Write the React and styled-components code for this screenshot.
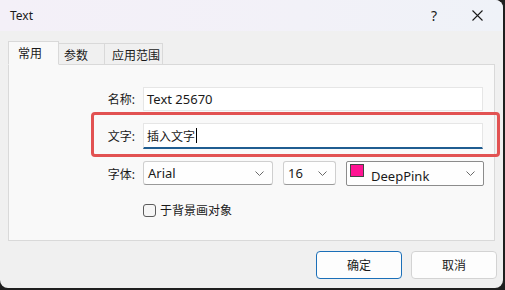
import React from 'react';
import styled, { createGlobalStyle } from 'styled-components';

const GlobalStyle = createGlobalStyle`
  html, body {
    margin: 0;
    padding: 0;
    background: #1f1f1f;
  }
  body {
    font-family: "Noto Sans", "Noto Sans CJK SC", sans-serif;
    font-size: 12px;
    color: #1a1a1a;
  }
`;

const Chevron = () => (
  <svg width="9" height="5" viewBox="0 0 9 5">
    <path d="M0.5 0.5 L4.5 4.5 L8.5 0.5" fill="none" stroke="#6a6a6a" strokeWidth="1" />
  </svg>
);

const CloseIcon = () => (
  <svg width="11" height="11" viewBox="0 0 11 11">
    <path d="M0.5 0.5 L10.5 10.5 M10.5 0.5 L0.5 10.5" stroke="#1a1a1a" strokeWidth="1.1" />
  </svg>
);

const App = () => {
  return (
    <>
      <GlobalStyle />
      <Window>
        <TitleBar>
          <Title>Text</Title>
          <TitleButtons>
            <HelpBtn>?</HelpBtn>
            <CloseBtn>
              <CloseIcon />
            </CloseBtn>
          </TitleButtons>
        </TitleBar>

        <Content>
          <TabStrip>
            <Tab active width={51} pad={9}>常用</Tab>
            <Tab width={46} pad={5}>参数</Tab>
            <Tab width={58} pad={7}>应用范围</Tab>
          </TabStrip>

          <Panel>
            <Form>
              <Label>名称:</Label>
              <TextInput>Text 25670</TextInput>

              <Label>文字:</Label>
              <TextInput focused size={12}>
                插入文字
                <Caret />
              </TextInput>

              <Label>字体:</Label>
              <ComboRow>
                <Combo width={130}>
                  <ComboText>Arial</ComboText>
                  <Chevron />
                </Combo>
                <Combo width={53}>
                  <ComboText>16</ComboText>
                  <Chevron />
                </Combo>
                <ColorCombo>
                  <Swatch color="#ff1493" />
                  <ColorText>DeepPink</ColorText>
                  <Chevron />
                </ColorCombo>
              </ComboRow>

              <span />
              <CheckRow>
                <CheckBox />
                <span>于背景画对象</span>
              </CheckRow>
            </Form>
          </Panel>

          <Footer>
            <Button primary>确定</Button>
            <Button>取消</Button>
          </Footer>
        </Content>

        <Highlight />
      </Window>
    </>
  );
};

const Window = styled.div`
  position: relative;
  width: 503px;
  height: 288px;
  background: #f0f0f0;
  border-radius: 0 8px 8px 8px;
  overflow: hidden;
  display: flex;
  flex-direction: column;
`;

const TitleBar = styled.div`
  height: 31px;
  display: flex;
  align-items: center;
  justify-content: space-between;
  padding-left: 10px;
  background: linear-gradient(90deg, #f4f0f8 0%, #f2f1f8 60%, #eff2f8 100%);
`;

const Title = styled.div`
  font-size: 12px;
  color: #1a1a1a;
`;

const TitleButtons = styled.div`
  display: flex;
  align-items: center;
  height: 100%;
`;

const HelpBtn = styled.div`
  width: 46px;
  display: flex;
  justify-content: center;
  font-size: 14px;
  color: #1a1a1a;
  margin-right: -3px;
`;

const CloseBtn = styled.div`
  width: 46px;
  display: flex;
  justify-content: center;
  padding-right: 3px;
`;

const Content = styled.div`
  flex: 1;
  display: flex;
  flex-direction: column;
  padding: 10px 0 0 8px;
`;

const TabStrip = styled.div`
  display: flex;
  align-items: flex-end;
  height: 24px;
  position: relative;
  z-index: 1;
  margin-bottom: -1px;
`;

const Tab = styled.div`
  box-sizing: border-box;
  width: ${p => p.width}px;
  height: ${p => (p.active ? 24 : 22)}px;
  padding-left: ${p => p.pad}px;
  display: flex;
  align-items: center;
  font-size: 12px;
  color: #1a1a1a;
  background: ${p => (p.active ? '#f9f9f9' : '#f0f0f0')};
  border: 1px solid #d9d9d9;
  border-bottom: ${p => (p.active ? '1px solid #f9f9f9' : '1px solid #d9d9d9')};
  border-left: ${p => (p.active ? '1px solid #d9d9d9' : 'none')};
  padding-top: ${p => (p.active ? 0 : 1)}px;
`;

const Panel = styled.div`
  box-sizing: border-box;
  width: 487px;
  height: 177px;
  background: #f9f9f9;
  border: 1px solid #d9d9d9;
`;

const Form = styled.div`
  display: grid;
  grid-template-columns: 126px 340px;
  column-gap: 8px;
  row-gap: 12px;
  align-items: center;
  padding-top: 22px;
`;

const Label = styled.div`
  text-align: right;
  font-size: 12px;
  color: #1a1a1a;
`;

const TextInput = styled.div`
  box-sizing: border-box;
  height: ${p => (p.focused ? 26 : 24)}px;
  display: flex;
  align-items: center;
  padding-left: 3px;
  background: #ffffff;
  border: 1px solid #e6e6e6;
  border-bottom: ${p => (p.focused ? '2px solid #1f5d91' : '1px solid #e6e6e6')};
  font-size: ${p => p.size || 13}px;
  color: #1a1a1a;
`;

const Caret = styled.span`
  display: inline-block;
  width: 1px;
  height: 15px;
  background: #000;
  margin-left: 1px;
`;

const ComboRow = styled.div`
  display: flex;
  gap: 10px;
  margin-right: -1px;
`;

const Combo = styled.div`
  box-sizing: border-box;
  width: ${p => p.width}px;
  height: 24px;
  display: flex;
  align-items: center;
  justify-content: space-between;
  padding: 0 8px 0 4px;
  background: #fefefe;
  border: 1px solid #cfcfcf;
  border-bottom-color: #9a9a9a;
  border-radius: 3px;
`;

const ComboText = styled.span`
  font-size: 13px;
  color: #1a1a1a;
`;

const ColorCombo = styled.div`
  box-sizing: border-box;
  flex: 1;
  height: 25px;
  display: flex;
  align-items: center;
  padding: 0 8px 0 3px;
  background: #fefefe;
  border: 1px solid #8c8c8c;
  border-radius: 2px;
`;

const Swatch = styled.span`
  box-sizing: border-box;
  width: 14px;
  height: 13px;
  background: ${p => p.color};
  border: 1px solid #444;
  margin-top: -6px;
  margin-right: 7px;
`;

const ColorText = styled.span`
  flex: 1;
  font-size: 13px;
  line-height: 16px;
  color: #1a1a1a;
  margin-top: 5px;
`;

const CheckRow = styled.div`
  display: flex;
  align-items: center;
  gap: 4px;
  margin-top: 3px;
  font-size: 12px;
  color: #1a1a1a;
`;

const CheckBox = styled.span`
  box-sizing: border-box;
  width: 13px;
  height: 13px;
  border: 1px solid #5c5c5c;
  border-radius: 3px;
  background: #f6f6f6;
`;

const Footer = styled.div`
  display: flex;
  justify-content: flex-end;
  gap: 9px;
  padding: 10px 6px 0 0;
`;

const Button = styled.div`
  box-sizing: border-box;
  width: 86px;
  height: 28px;
  display: flex;
  align-items: center;
  justify-content: center;
  font-size: 12px;
  color: #1a1a1a;
  background: #fdfdfd;
  border: ${p => (p.primary ? '1.5px solid #1b6fb8' : '1px solid #d3d3d3')};
  border-radius: 4px;
`;

const Highlight = styled.div`
  position: absolute;
  left: 91px;
  top: 112px;
  width: 409px;
  height: 45px;
  box-sizing: border-box;
  border: 3px solid #e25252;
  border-radius: 4px;
  pointer-events: none;
`;

export default App;
